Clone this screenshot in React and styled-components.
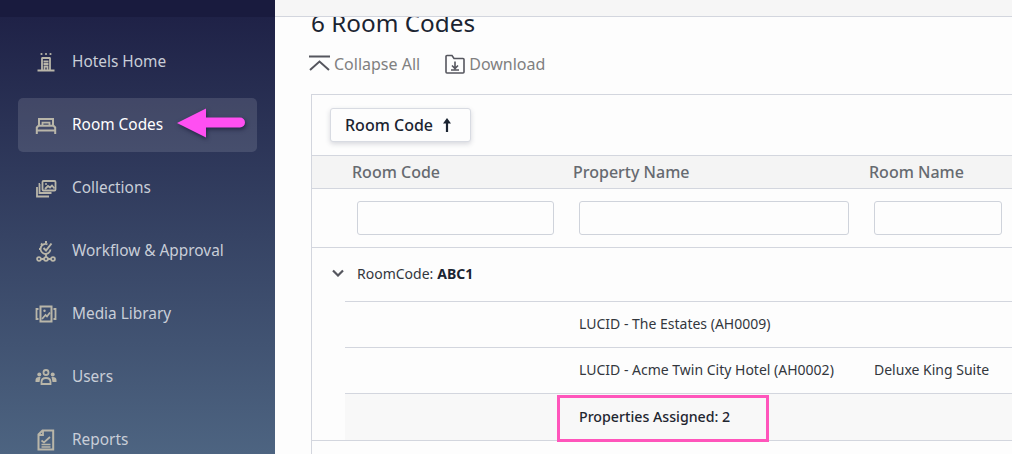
import React from "react";
import styled, { createGlobalStyle } from "styled-components";

const GlobalStyle = createGlobalStyle`
  html, body {
    margin: 0;
    height: 100%;
    overflow: hidden;
    background: #fdfdfd;
    font-family: "Noto Sans", "Open Sans", sans-serif;
  }
`;

const Page = styled.div`
  display: flex;
  width: 1012px;
  height: 454px;
  overflow: hidden;
`;

const Sidebar = styled.aside`
  flex: 0 0 275px;
  background: linear-gradient(180deg, #1f2247 17px, #4d6481 100%);
`;

const SideTop = styled.div`
  height: 17px;
  background: #191b3e;
`;

const Nav = styled.nav`
  display: flex;
  flex-direction: column;
  gap: 9px;
  padding: 18px 18px 0;
`;

const NavItem = styled.a`
  position: relative;
  display: flex;
  align-items: center;
  flex: 0 0 54px;
  box-sizing: border-box;
  padding: 0 0 1px 17px;
  gap: 15px;
  border-radius: 5px;
  font-size: 15.4px;
  color: ${(p) => (p.$active ? "#ffffff" : "#c9ced8")};
  background: ${(p) => (p.$active ? "rgba(255,255,255,0.12)" : "transparent")};
`;

const NavIcon = styled.svg`
  flex: 0 0 22px;
  width: 22px;
  height: 22px;
  fill: none;
  stroke: #b9b6a9;
  stroke-width: 1.8;
`;

const Arrow = styled.svg`
  position: absolute;
  left: 157px;
  top: 8px;
  width: 74px;
  height: 36px;
  overflow: visible;
  filter: drop-shadow(1px 2px 2px rgba(10, 10, 40, 0.55));
`;

const Main = styled.main`
  flex: 1;
  min-width: 0;
  display: flex;
  flex-direction: column;
`;

const TopBar = styled.div`
  position: relative;
  z-index: 1;
  flex: 0 0 16px;
  background: #f6f6f6;
  border-bottom: 1px solid #d3d6de;
`;

const Content = styled.div`
  display: flex;
  flex-direction: column;
  padding-left: 36px;
`;

const Title = styled.h1`
  margin: -13px 0 0;
  height: 38px;
  line-height: 38px;
  font-size: 24.3px;
  font-weight: 400;
  color: #1b2431;
`;

const Toolbar = styled.div`
  display: flex;
  align-items: center;
  height: 28px;
  margin: 8px 0 16px -2px;
  gap: 24px;
`;

const ToolButton = styled.span`
  display: flex;
  align-items: center;
  gap: 3px;
  font-size: 16px;
  color: #808080;
`;

const ToolIcon = styled.svg`
  width: 22px;
  height: 22px;
  fill: none;
  stroke: #55565e;
  stroke-width: 1.6;
`;

const Panel = styled.section`
  margin-right: -10px;
  border: 1px solid #d3d6de;
  border-bottom: none;
  height: 400px;
`;

const GroupPanel = styled.div`
  display: flex;
  align-items: center;
  height: 60px;
  padding-left: 18px;
`;

const GroupChip = styled.button`
  display: flex;
  align-items: center;
  gap: 9px;
  height: 34px;
  padding: 0 18px 0 14px;
  border: 1px solid #d8dbe2;
  border-radius: 3px;
  background: #fdfdfd;
  box-shadow: 0 2px 5px rgba(60, 64, 90, 0.2);
  font: 500 16px "Noto Sans", sans-serif;
  color: #1b2431;
`;

const HeaderRow = styled.div`
  display: grid;
  grid-template-columns: 40px 221px 296px 1fr;
  align-items: center;
  height: 32px;
  background: #f4f4f4;
  border-top: 1px solid #d3d6de;
  border-bottom: 1px solid #d3d6de;
  font-size: 16px;
  font-weight: 500;
  color: #666a70;
`;

const FilterRow = styled.div`
  display: grid;
  grid-template-columns: 39px 222px 295px 1fr;
  align-items: center;
  height: 58px;
  border-bottom: 1px solid #d3d6de;
`;

const FilterCell = styled.div`
  padding: 0 19px 0 6px;
`;

const FilterInput = styled.input`
  display: block;
  box-sizing: border-box;
  width: 100%;
  height: 34px;
  border: 1px solid #cfd3db;
  border-radius: 3px;
  background: #fdfdfd;
`;

const GroupRow = styled.div`
  display: flex;
  align-items: center;
  height: 54px;
  margin-left: 33px;
  padding-bottom: 3px;
  box-sizing: border-box;
  border-bottom: 1px solid #d3d6de;
  font-size: 14px;
  color: #33373d;
`;

const Chevron = styled.svg`
  width: 12px;
  height: 8px;
  margin: 0 13px 0 -13px;
  fill: none;
  stroke: #55565e;
  stroke-width: 2.2;
`;

const GroupValue = styled.b`
  margin-left: 4px;
  font-weight: 700;
  color: #1b2431;
`;

const DataRow = styled.div`
  display: grid;
  grid-template-columns: 228px 295px 1fr;
  align-items: center;
  box-sizing: border-box;
  height: ${(p) => p.$height}px;
  margin-left: 33px;
  padding-bottom: 2px;
  background: ${(p) => (p.$summary ? "#f8f8f8" : "transparent")};
  border-bottom: 1px solid #d3d6de;
  font-size: 14px;
  color: #33373d;
`;

const DataCell = styled.div`
  padding-left: 6px;
  white-space: nowrap;
`;

const SummaryCell = styled(DataCell)`
  position: relative;
  font-size: 14.2px;
  font-weight: 500;
  color: #1f2630;
`;

const Highlight = styled.div`
  position: absolute;
  left: -16px;
  top: -12px;
  width: 206px;
  height: 41px;
  border: 3px solid #ff55bb;
`;

const PanelRule = styled.div`
  border-top: 1px solid #d3d6de;
  margin-top: -1px;
`;

const Icons = {
  hotel: (
    <>
      <circle cx="6.500" cy="3" r="1.100" fill="#b9b6a9" stroke="none" />
      <circle cx="11" cy="3" r="1.100" fill="#b9b6a9" stroke="none" />
      <circle cx="15.500" cy="3" r="1.100" fill="#b9b6a9" stroke="none" />
      <path d="M6.500 7h9M7 7v12M15 7v12M2.500 19.500h17" />
      <path d="M8.500 10.500h5M8.500 13h5M9.500 19v-3.500h3V19" />
    </>
  ),
  bed: (
    <>
      <path d="M4 11.500V5h14v6.500" strokeWidth="2" />
      <path d="M7.500 11V8.700h7V11" />
      <path d="M1.800 20v-6.500l1.700-1.800h15l1.700 1.800V20M2 16.500h18" strokeWidth="2" />
    </>
  ),
  collections: (
    <>
      <rect x="7.500" y="4" width="13" height="9.500" rx="1" />
      <path d="M5 7H4.500v9h12M2 10v9.500h12" />
      <path d="M10 12l3-3 2 1.500 2-2 2.500 3" />
      <circle cx="11" cy="7" r="1" fill="#b9b6a9" stroke="none" />
    </>
  ),
  workflow: (
    <>
      <circle cx="4" cy="19" r="1.900" />
      <circle cx="11" cy="19" r="1.900" />
      <circle cx="18" cy="19" r="1.900" />
      <path d="M5.900 19h3.200M12.900 19h3.200M11 17v-3" />
      <path d="M15.500 9.500a5 5 0 1 1-3-5.200" />
      <path d="M8.500 8l2.500 2.500 5.500-7" strokeWidth="2" />
      <path d="M6 3.500l1.500 1.500M11 1v2M4 9h2" strokeWidth="2" />
    </>
  ),
  media: (
    <>
      <path d="M3.500 6H1.500v10h2M18.500 6h2v10h-2" />
      <rect x="5.500" y="3.500" width="11" height="15" strokeWidth="2" />
      <path d="M7 16l3.500-4 1.500 1.500 3-4" />
      <circle cx="9.500" cy="7.800" r="1.200" fill="#b9b6a9" stroke="none" />
    </>
  ),
  users: (
    <>
      <circle cx="11" cy="6.500" r="2.500" />
      <circle cx="4.300" cy="8.500" r="2" fill="#b9b6a9" stroke="none" />
      <circle cx="17.700" cy="8.500" r="2" fill="#b9b6a9" stroke="none" />
      <path d="M6.500 18v-2c0-2.500 2-4 4.500-4s4.500 1.500 4.500 4v2z" />
      <path d="M0.500 16v-2c0-1.700 1.500-3 3.500-3h1.500l-1 5zM21.500 16v-2c0-1.700-1.500-3-3.500-3h-1.500l1 5z" fill="#b9b6a9" stroke="none" />
    </>
  ),
  reports: (
    <>
      <path d="M7.500 1.500h10.700v19H3.500V5.500z" strokeWidth="2" />
      <path d="M6.500 11.500l2.500 2 6-5.500M6.500 15.500h9M6.500 18h9" strokeWidth="1.700" />
      <path d="M8 2v4H4" />
    </>
  ),
};

const navItems = [
  { label: "Hotels Home", icon: "hotel" },
  { label: "Room Codes", icon: "bed", active: true },
  { label: "Collections", icon: "collections" },
  { label: "Workflow & Approval", icon: "workflow" },
  { label: "Media Library", icon: "media" },
  { label: "Users", icon: "users" },
  { label: "Reports", icon: "reports" },
];

export default function App() {
  return (
    <Page>
      <GlobalStyle />
      <Sidebar>
        <SideTop />
        <Nav>
          {navItems.map((item) => (
            <NavItem key={item.label} $active={item.active}>
              <NavIcon viewBox="0 0 22 22">{Icons[item.icon]}</NavIcon>
              {item.label}
              {item.active && (
                <Arrow viewBox="0 0 74 36">
                  <path
                    d="M2 17L31 2.500V11.500H65a5 5 0 0 1 0 10H31V31.500Z"
                    fill="#ff4ff2"
                  />
                </Arrow>
              )}
            </NavItem>
          ))}
        </Nav>
      </Sidebar>
      <Main>
        <TopBar />
        <Content>
          <Title>6 Room Codes</Title>
          <Toolbar>
            <ToolButton>
              <ToolIcon viewBox="0 0 22 22">
                <path d="M0 3.500h21M1 17l9.500-8.500L20 17" strokeWidth="2" />
              </ToolIcon>
              Collapse All
            </ToolButton>
            <ToolButton>
              <ToolIcon viewBox="0 0 22 22">
                <path d="M2 6V3.500a1 1 0 0 1 1-1h5l2 3h9a1 1 0 0 1 1 1V19a1 1 0 0 1-1 1H3a1 1 0 0 1-1-1z" />
                <path d="M11 8.500v6.500M8 12.500l3 3 3-3M7 17h8" />
              </ToolIcon>
              Download
            </ToolButton>
          </Toolbar>
          <Panel>
            <GroupPanel>
              <GroupChip>
                Room Code
                <svg width="10" height="16" viewBox="0 0 10 16" fill="#1b2431">
                  <path d="M5 1L9 6.500H6.100V15H3.900V6.500H1Z" />
                </svg>
              </GroupChip>
            </GroupPanel>
            <HeaderRow>
              <span />
              <span>Room Code</span>
              <span>Property Name</span>
              <span>Room Name</span>
            </HeaderRow>
            <FilterRow>
              <span />
              <FilterCell><FilterInput /></FilterCell>
              <FilterCell><FilterInput /></FilterCell>
              <FilterCell><FilterInput /></FilterCell>
            </FilterRow>
            <GroupRow>
              <Chevron viewBox="0 0 12 8">
                <path d="M1 1.500l5 5 5-5" />
              </Chevron>
              RoomCode:<GroupValue>ABC1</GroupValue>
            </GroupRow>
            <DataRow $height={46}>
              <span />
              <DataCell>LUCID - The Estates (AH0009)</DataCell>
            </DataRow>
            <DataRow $height={46}>
              <span />
              <DataCell>LUCID - Acme Twin City Hotel (AH0002)</DataCell>
              <DataCell>Deluxe King Suite</DataCell>
            </DataRow>
            <DataRow $summary $height={47}>
              <span />
              <SummaryCell>
                Properties Assigned: 2
                <Highlight />
              </SummaryCell>
            </DataRow>
            <PanelRule />
          </Panel>
        </Content>
      </Main>
    </Page>
  );
}
